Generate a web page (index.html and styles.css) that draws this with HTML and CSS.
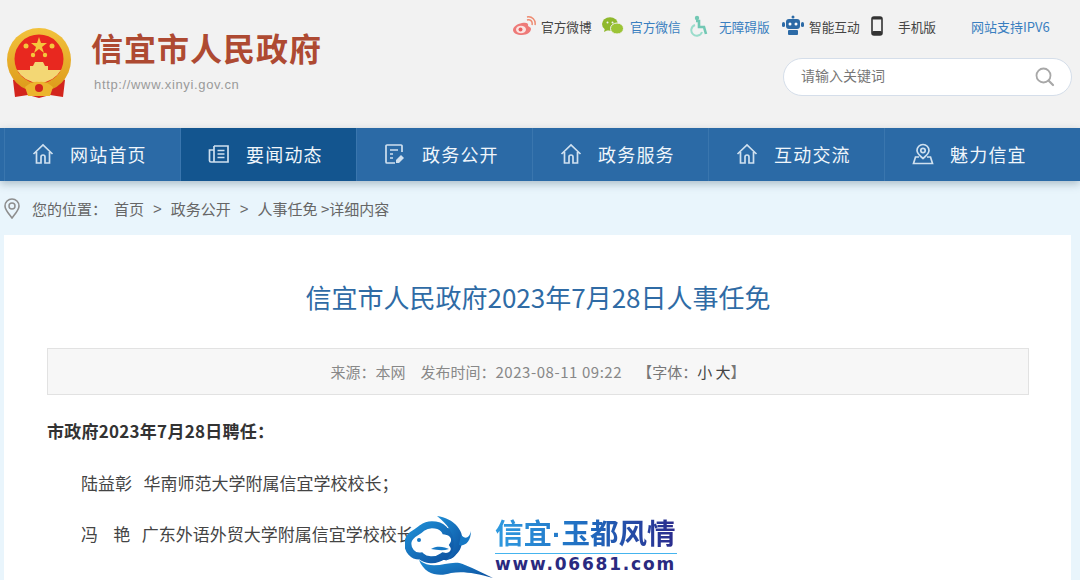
FILE: index.html
```html
<!DOCTYPE html>
<html lang="zh-CN">
<head>
<meta charset="utf-8">
<title>信宜市人民政府2023年7月28日人事任免</title>
<link rel="stylesheet" href="styles.css">
</head>
<body>
<header class="header">
  <svg class="emblem" viewBox="0 -2 66 70" width="66" height="70">
    <defs><linearGradient id="gold" x1="0" y1="0" x2="0" y2="1"><stop offset="0" stop-color="#f2c23c"/><stop offset="1" stop-color="#dd9a1a"/></linearGradient></defs>
    <path d="M12 46 L7 50 L9 67 L22 65 L33 68 L44 65 L57 67 L59 50 L54 46 Z" fill="#d3251d"/>
    <circle cx="33" cy="30" r="32" fill="url(#gold)"/>
    <circle cx="33" cy="29" r="24.500" fill="#e8281f"/>
    <polygon points="33,7 35,13 41,13 36,17 38,23 33,19 28,23 30,17 25,13 31,13" fill="#f5c63c"/>
    <circle cx="20" cy="16" r="2.500" fill="#f5c63c"/><circle cx="46" cy="16" r="2.500" fill="#f5c63c"/>
    <circle cx="27" cy="25" r="2.200" fill="#f5c63c"/><circle cx="39" cy="25" r="2.200" fill="#f5c63c"/>
    <path d="M24 40 V36 H27 L29 32 H37 L39 36 H42 V40 H55 Q48 52 33 53 Q18 52 11 40 Z" fill="#f3d774"/>
    <path d="M19 57 Q26 51 33 52 Q40 51 47 57 L44 66 H22 Z" fill="#ecb52e"/>
    <circle cx="33" cy="58" r="4" fill="#d3251d"/>
  </svg>
  <div class="brand">
    <div class="brand-name">信宜市人民政府</div>
    <div class="brand-url">http://www.xinyi.gov.cn</div>
  </div>
  <div class="tools">
    <nav class="links">
      <a class="link dark w-weibo"><svg width="24" height="20" viewBox="0 0 24 20"><path d="M10 7C5 8 1 11 1 14c0 3 4 5 9 5s9-3 9-6c0-2-2-2-3-3 1-3-2-4-6-3z" fill="#ee7a78"/><ellipse cx="9" cy="13.500" rx="5" ry="3.800" fill="#fbe3e1"/><circle cx="8.500" cy="13.500" r="2" fill="#e8605f"/><path d="M15 4c3-1 6 1 5 5M15 1c5-1 9 3 8 8" fill="none" stroke="#ee8a70" stroke-width="1.500"/></svg>官方微博</a>
      <a class="link blue w-wechat"><svg width="22" height="20" viewBox="0 0 22 20"><ellipse cx="8" cy="8" rx="8" ry="6.800" fill="#8fb82c"/><path d="M3 12l-1 4 4-2z" fill="#8fb82c"/><ellipse cx="15" cy="12.500" rx="6.500" ry="5.500" fill="#9cc436" stroke="#f2f2f2"/><circle cx="5.500" cy="6.500" r="1" fill="#f2f2f2"/><circle cx="10.500" cy="6.500" r="1" fill="#f2f2f2"/></svg>官方微信</a>
      <a class="link blue w-access"><svg width="18" height="22" viewBox="0 0 18 22"><circle cx="7" cy="3" r="2.200" fill="#72c8b4"/><path d="M6 6h3v6h5l2 7" fill="none" stroke="#72c8b4" stroke-width="2.600"/><path d="M5 10a5.500 5.500 0 1 0 7 7" fill="none" stroke="#9adccb" stroke-width="2"/></svg>无障碍版</a>
      <a class="link dark w-robot"><svg width="22" height="22" viewBox="0 0 22 22"><circle cx="11" cy="2" r="1.500" fill="#2c6aa6"/><rect x="4" y="4" width="14" height="10" rx="3" fill="#2c6aa6"/><rect x="0" y="7" width="3" height="5" rx="1.500" fill="#2c6aa6"/><rect x="19" y="7" width="3" height="5" rx="1.500" fill="#2c6aa6"/><circle cx="8" cy="9" r="1.500" fill="#fff"/><circle cx="14" cy="9" r="1.500" fill="#fff"/><rect x="6" y="15" width="10" height="5" rx="1" fill="#2c6aa6"/></svg>智能互动</a>
      <a class="link dark w-phone"><svg width="12" height="20" viewBox="0 0 12 20"><rect x="1" y="1" width="10" height="18" rx="2" fill="#f2f2f2" stroke="#333" stroke-width="1.600"/><rect x="1" y="15" width="10" height="4" rx="1.500" fill="#333"/><rect x="1" y="1" width="10" height="2.500" rx="1" fill="#333"/></svg>手机版</a>
      <a class="link blue w-ipv6">网站支持IPV6</a>
    </nav>
    <div class="search">
      <span class="placeholder">请输入关键词</span>
      <svg width="20" height="20" viewBox="0 0 20 20"><circle cx="8.500" cy="8.500" r="7" fill="none" stroke="#a8a8a8" stroke-width="1.800"/><path d="M13.500 13.500L18 18" stroke="#a8a8a8" stroke-width="2.200" stroke-linecap="round"/></svg>
    </div>
  </div>
</header>

<nav class="mainnav">
  <a class="nav-item"><svg class="nav-icon" viewBox="0 0 22 22"><path d="M1.500 11L11 2l9.500 9M4.500 9v11h4.500v-6a2 2 0 0 1 4 0v6h4.500V9"/></svg>网站首页</a>
  <a class="nav-item active"><svg class="nav-icon" viewBox="0 0 22 22"><path d="M6 3h14v16H3a1.500 1.500 0 0 1-1.500-1.500V7H6M6 3v16M9.500 7.500h7M9.500 11h7M9.500 14.500h7"/></svg>要闻动态</a>
  <a class="nav-item"><svg class="nav-icon" viewBox="0 0 22 22"><path d="M18 9V3a1 1 0 0 0-1-1H3a1 1 0 0 0-1 1v16a1 1 0 0 0 1 1h8M6 7h8M6 11h3M6 15h3"/><path class="pen" d="M12 17l5-5 3 3-5 5h-3z"/></svg>政务公开</a>
  <a class="nav-item"><svg class="nav-icon" viewBox="0 0 22 22"><path d="M1.500 11L11 2l9.500 9M4.500 9v11h4.500v-6a2 2 0 0 1 4 0v6h4.500V9"/></svg>政务服务</a>
  <a class="nav-item"><svg class="nav-icon" viewBox="0 0 22 22"><path d="M1.500 11L11 2l9.500 9M4.500 9v11h4.500v-6a2 2 0 0 1 4 0v6h4.500V9"/></svg>互动交流</a>
  <a class="nav-item"><svg class="nav-icon" viewBox="0 0 22 22"><path d="M11 1.500a6 6 0 0 1 6 6c0 3-3 5.500-6 8-3-2.500-6-5-6-8a6 6 0 0 1 6-6zM7 14H3.500L1.500 20.500h19L18.500 14H15"/><circle cx="11" cy="7.500" r="2.200"/></svg>魅力信宜</a>
</nav>

<div class="crumbs">
  <svg width="16" height="21" viewBox="0 0 16 21"><path d="M8 1a7 7 0 0 1 7 7c0 4-4 8-7 12-3-4-7-8-7-12a7 7 0 0 1 7-7z" fill="none" stroke="#8e8e8e" stroke-width="1.600"/><circle cx="8" cy="8" r="3" fill="none" stroke="#8e8e8e" stroke-width="1.500"/></svg>
  <span class="crumb-label">您的位置：</span>
  <span>首页</span><span class="sep">&gt;</span><span>政务公开</span><span class="sep">&gt;</span><span>人事任免 &gt;详细内容</span>
</div>

<main class="card">
  <h1 class="title">信宜市人民政府2023年7月28日人事任免</h1>
  <div class="meta">
    <span>来源：本网</span><span>发布时间：<span class="date">2023-08-11 09:22</span></span><span class="font-size">【字体：<b>小 大</b>】</span>
  </div>
  <p class="lead">市政府2023年7月28日聘任：</p>
  <p class="para">陆益彰&nbsp;&nbsp;&nbsp;华南师范大学附属信宜学校校长；</p>
  <p class="para">冯&nbsp;&nbsp;&nbsp;&nbsp;艳&nbsp;&nbsp;&nbsp;广东外语外贸大学附属信宜学校校长；</p>
</main>

<div class="watermark">
  <svg class="wm-logo" width="92" height="64" viewBox="0 0 92 64">
    <defs><linearGradient id="wmb" x1="0" y1="0" x2="1" y2="1"><stop offset="0" stop-color="#1f8fd6"/><stop offset="1" stop-color="#0c4f9e"/></linearGradient></defs>
    <path d="M3 27C4 19 12 18 17 13 25 7 37 10 40 16 48 17 52 24 48 30 52 36 46 43 38 41 30 47 20 45 16 41 8 42 2 35 3 27Z" fill="#fff" stroke="url(#wmb)" stroke-width="7"/>
    <path d="M32 1C48 3 62 16 56 32 54 40 44 44 40 46 52 36 54 18 32 1Z" fill="url(#wmb)"/>
    <path d="M56 20C60 24 64 24 66 16 66 26 60 32 54 30Z" fill="#1678c4"/>
    <path d="M14 45C30 58 46 42 60 50 70 54 78 58 88 63 70 58 58 56 46 58 34 62 20 60 14 45Z" fill="url(#wmb)"/>
    <path d="M26 34C32 30 40 32 44 34 38 36 32 35 26 34Z" fill="#1678c4"/>
    <circle cx="14" cy="25" r="2" fill="#1678c4"/>
  </svg>
  <div class="wm-text">
    <div class="wm-cn">信宜<span class="wm-dot">·</span>玉都风情</div>
    <div class="wm-en">www.06681.com</div>
  </div>
</div>
</body>
</html>
```
FILE: styles.css
```css
* { box-sizing: border-box; }
html, body { margin: 0; height: 580px; overflow: hidden; }
body {
  position: relative;
  background: #e9f5fc;
  font-family: "Noto Sans CJK SC", "Liberation Sans", sans-serif;
  color: #333;
}
.header {
  height: 128px;
  background: #f2f2f2;
  display: flex;
  padding: 28px 8px 0 6px;
}
.emblem { flex: none; }
.brand { margin-left: 20px; }
.brand-name {
  font-size: 32px;
  line-height: 44px;
  margin-top: -3px;
  font-weight: 700;
  color: #ae4a32;
  letter-spacing: 1px;
  margin-left: -1px;
}
.brand-url {
  margin-top: 8px;
  margin-left: 2px;
  font: 13px/16px "Liberation Sans", sans-serif;
  letter-spacing: .65px;
  color: #9a9a9a;
}
.tools {
  margin-left: auto;
  margin-top: -28px;
  display: flex;
  flex-direction: column;
  align-items: flex-end;
}
.links { display: flex; height: 58px; padding-top: 15px; width: 560px; }
.link {
  display: flex;
  align-items: center;
  height: 22px;
  font-size: 12.700px;
  white-space: nowrap;
}
.link svg { flex: none; margin-right: 5px; }
.dark { color: #444; }
.blue { color: #3a7fc0; }
.w-weibo { width: 90px; }
.w-wechat { width: 88px; }
.w-wechat svg { margin-right: 6px; }
.w-access { width: 92px; }
.w-access svg { margin-right: 11px; }
.w-robot { width: 89px; }
.w-phone { width: 100px; }
.w-phone svg { margin-right: 15px; }
.w-ipv6 { font-size: 13px; }
.search {
  width: 289px;
  height: 38px;
  border: 1px solid #d5deea;
  border-radius: 19px;
  background: #fff;
  display: flex;
  align-items: center;
  justify-content: space-between;
  padding: 0 16px 0 17px;
}
.placeholder { font-size: 14px; color: #777; padding-bottom: 5px; }
.mainnav {
  height: 53px;
  display: flex;
  padding-left: 4px;
  background: #2b6aa6;
  box-shadow: 0 3px 8px rgba(60, 90, 110, .35);
  position: relative;
}
.nav-item {
  width: 176px;
  display: flex;
  align-items: center;
  padding-left: 27px;
  padding-bottom: 2px;
  border-left: 1px solid #3a76ae;
  color: #f0f6fb;
  font-size: 18px;
  letter-spacing: 1.200px;
  white-space: nowrap;
}
.nav-item.active { background: #13558f; }
.nav-icon {
  flex: none;
  width: 22px;
  height: 22px;
  margin-right: 16px;
  fill: none;
  stroke: #cfe0ef;
  stroke-width: 1.700;
}
.pen { fill: #cfe0ef; stroke: none; }
.crumbs {
  height: 54px;
  display: flex;
  align-items: center;
  padding-left: 4px;
  font-size: 15px;
  color: #666;
}
.crumb-label { margin: 0 7px 0 12px; }
.sep { margin: 0 9px; font-family: "Liberation Sans", sans-serif; }
.card {
  margin: 0 9px 0 4px;
  height: 345px;
  background: #fff;
  padding: 42px 42px 0 43px;
}
.title {
  margin: 0 0 31px;
  text-align: center;
  font-size: 26px;
  line-height: 40px;
  font-weight: 400;
  color: #2f6ba5;
}
.meta {
  height: 47px;
  background: #f7f7f7;
  border: 1px solid #e2e2e2;
  display: flex;
  justify-content: center;
  align-items: center;
  gap: 15px;
  font-size: 15px;
  color: #888;
}
.date { letter-spacing: .55px; }
.meta b { font-weight: 400; color: #444; }
.font-size { color: #777; }
.lead { margin: 24px 0 0; font-size: 17px; line-height: 24px; font-weight: 700; color: #333; letter-spacing: .25px; }
.para { margin: 28px 0 0 34px; font-size: 17px; line-height: 24px; color: #444; white-space: nowrap; }
.para + .para { margin-top: 27px; }
.watermark {
  position: absolute;
  left: 405px;
  top: 515px;
  display: flex;
  align-items: flex-start;
}
.wm-logo { flex: none; }
.wm-text { margin-left: -2px; width: 182px; }
.wm-cn {
  font-size: 28.500px;
  line-height: 33px;
  padding-bottom: 2px;
  font-weight: 700;
  white-space: nowrap;
  background: linear-gradient(90deg, #2f9be0, #1f6cc0 50%, #2b2a8c);
  -webkit-background-clip: text;
  background-clip: text;
  color: transparent;
  border-bottom: 1px solid #45b4ee;
}
.wm-dot { font-family: "Liberation Sans", sans-serif; }
.wm-en {
  font: 700 17px/20px "DejaVu Sans", sans-serif;
  letter-spacing: 1.800px;
  color: #2a2a80;
  white-space: nowrap;
}
```
